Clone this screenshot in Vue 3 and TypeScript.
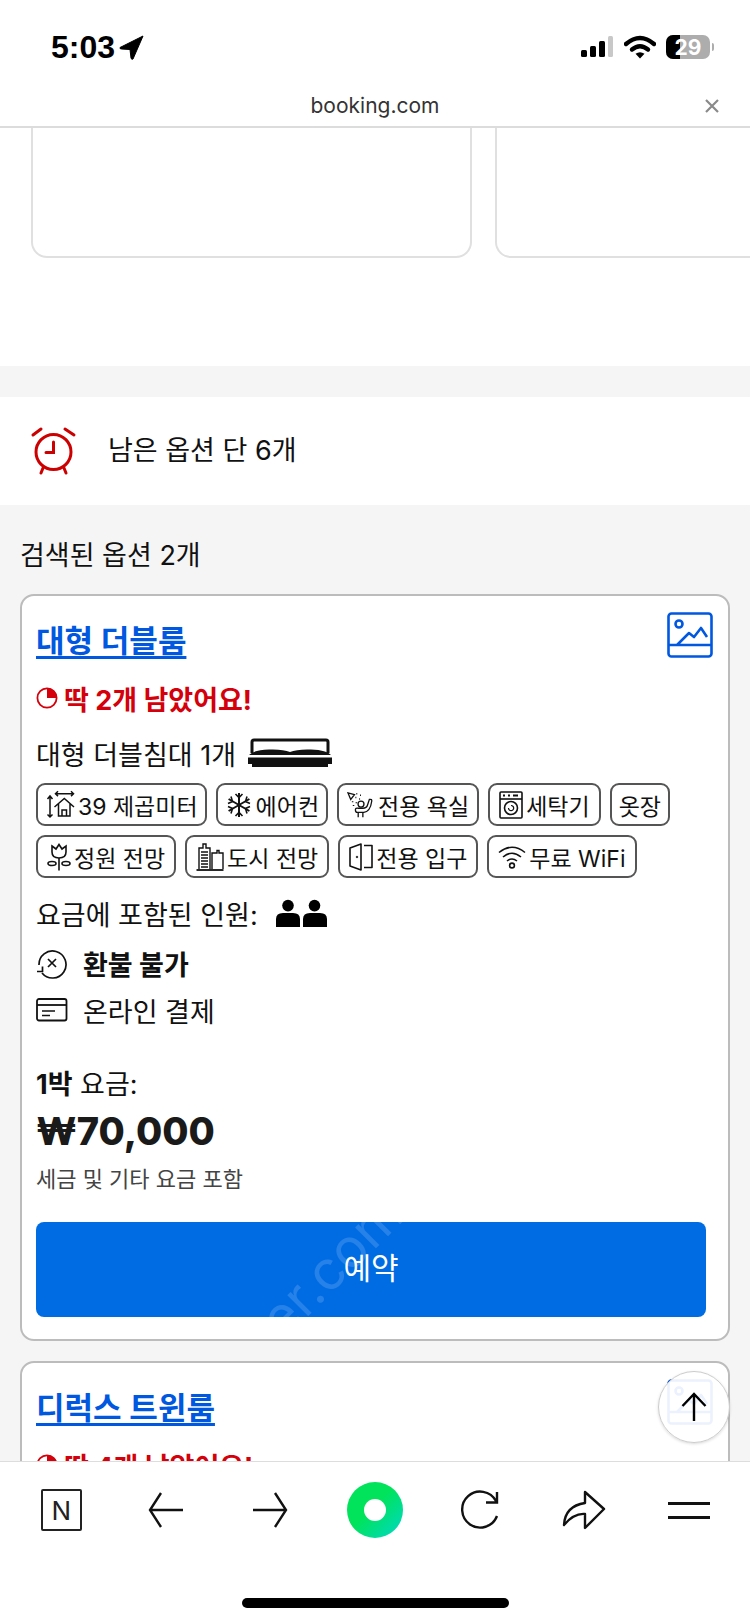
<script setup lang="ts">
const topCards = [1, 2]
</script>

<template>
  <div class="phone">
    <!-- status bar + browser url bar -->
    <header class="top">
      <div class="status">
        <div class="clock">
          <span>5:03</span>
          <svg width="26" height="26" viewBox="0 0 26 26"><path d="M24 2 L1 13.5 Q0.5 15 2.5 15 L11 15.5 L12 24 Q12.5 26 14 25 Z" fill="#000" stroke="#000" stroke-width="1" stroke-linejoin="round" /></svg>
        </div>
        <div class="status-right">
          <svg width="34" height="22" viewBox="0 0 34 22">
            <rect x="1" y="14" width="6" height="7" rx="1.5" fill="#000" />
            <rect x="10" y="10" width="6" height="11" rx="1.5" fill="#000" />
            <rect x="19" y="5" width="6" height="16" rx="1.5" fill="#000" />
            <rect x="28" y="0" width="5" height="21" rx="1.5" fill="#c8c8c8" />
          </svg>
          <svg width="32" height="24" viewBox="0 0 32 24">
            <path d="M2 9 Q16 -3 30 9" fill="none" stroke="#000" stroke-width="4.4" stroke-linecap="round" />
            <path d="M8 14.5 Q16 8 24 14.5" fill="none" stroke="#000" stroke-width="4.4" stroke-linecap="round" />
            <path d="M16 23.5 L11.5 18.8 Q16 15.5 20.5 18.8 Z" fill="#000" />
          </svg>
          <div class="battery"><div class="battery-fill"></div><span>29</span></div>
          <div class="battery-tip"></div>
        </div>
      </div>
      <div class="urlbar">
        <span class="url">booking.com</span>
        <svg class="url-close" width="16" height="16" viewBox="0 0 16 16"><path d="M2 2 L14 14 M14 2 L2 14" stroke="#8a8a8a" stroke-width="2.2" /></svg>
      </div>
    </header>

    <main class="content">
      <section class="top-cards">
        <div v-for="c in topCards" :key="c" class="blank-card"></div>
      </section>

      <section class="alarm">
        <svg width="48" height="52" viewBox="0 0 48 52" fill="none" stroke="#cc0000" stroke-width="3" stroke-linecap="round">
          <circle cx="23.5" cy="27" r="17.5" />
          <path d="M3 10 L11 4 M35 4 L44 10 M13 43 L11 48 M34 43 L36 48" />
          <path d="M23.5 17 V27.5 H16" />
        </svg>
        <span>남은 옵션 단 6개</span>
      </section>

      <section class="results">
        <h2 class="count">검색된 옵션 2개</h2>

        <article class="room">
          <div class="room-head">
            <a class="room-title">대형 더블룸</a>
            <svg class="pic" width="46" height="46" viewBox="0 0 46 46" fill="none" stroke="#0057e0" stroke-width="2.6" stroke-linejoin="round">
              <rect x="1.5" y="1.5" width="43" height="43" rx="3" />
              <circle cx="12" cy="12" r="3.5" />
              <path d="M10 33 L22 21 L27 25 L34 16 L40 25 M1.5 33 H44.5" />
            </svg>
          </div>

          <div class="left">
            <svg width="22" height="22" viewBox="0 0 22 22">
              <circle cx="11" cy="11" r="9.6" fill="none" stroke="#d4000b" stroke-width="1.8" />
              <path d="M11 1 A10 10 0 0 1 21 11 H11 Z" fill="#d4000b" />
            </svg>
            <span>딱 2개 남았어요!</span>
          </div>

          <div class="bed">
            <span>대형 더블침대 1개</span>
            <svg width="86" height="30" viewBox="0 0 86 30">
              <path d="M5 15 V4 Q5 2 7 2 H79 Q81 2 81 4 V15" fill="none" stroke="#111" stroke-width="3" />
              <path d="M2 17 Q6 12 22 11.5 Q36 11 43 14 Q50 11 64 11.5 Q80 12 84 17 Z" fill="#111" />
              <path d="M1 19.5 H85 V26 H81 V29 H5 V26 H1 Z" fill="#111" />
            </svg>
          </div>

          <div class="chips">
            <div class="chip chip-tight">
              <svg width="30" height="30" viewBox="0 0 30 30" fill="none" stroke="#111" stroke-width="1.5">
                <path d="M5 6 V27 M2.5 9 L5 6 L7.5 9 M2.5 24.5 L5 27 L7.5 24.5" />
                <path d="M10.5 3.7 H28.5 M13 1.3 L10.5 3.7 L13 6.1 M26 1.3 L28.5 3.7 L26 6.1" />
                <path d="M9.5 17 L19.3 8.5 L29 17 M13.5 14 V26 H25 V14 M17 26 V20 H21.5 V26" />
              </svg>
              <span>39 제곱미터</span>
            </div>
            <div class="chip chip-tight">
              <svg width="28" height="28" viewBox="0 0 28 28" fill="none" stroke="#111" stroke-width="1.6">
                <path d="M14 2 V26 M3.6 8 L24.4 20 M24.4 8 L3.6 20" stroke-width="2" />
                <path d="M10.5 3 L14 6.5 L17.5 3 M10.5 25 L14 21.5 L17.5 25 M3 12.5 L7.5 10.5 L6 5.5 M25 12.5 L20.5 10.5 L22 5.5 M3 15.5 L7.5 17.5 L6 22.5 M25 15.5 L20.5 17.5 L22 22.5" />
              </svg>
              <span>에어컨</span>
            </div>
            <div class="chip chip-snug">
              <svg width="28" height="28" viewBox="0 0 30 30" fill="none" stroke="#111" stroke-width="1.4">
                <path d="M1 2 L8 4 L4 9 Z" />
                <path d="M10 3 H11 M14 4.5 H15 M9 7 H10 M13 8.5 H14 M6 11 V12 M7 15 V16 M10 12 V13" stroke-dasharray="2 2" stroke-width="1.6" />
                <circle cx="15" cy="14" r="3.2" />
                <path d="M9 20 Q9 18 12 18.5 H17 Q21 18.5 22 15 L24 9 Q27 8.5 26.5 11 Q25 22 18 23 H11 Q9 23 9 20 Z" />
                <path d="M12 23 V28 M17 23 V28" />
              </svg>
              <span>전용 욕실</span>
            </div>
            <div class="chip">
              <svg width="24" height="28" viewBox="0 0 24 28" fill="none" stroke="#111" stroke-width="1.6">
                <rect x="1" y="1" width="22" height="26" rx="1" />
                <path d="M1 8 H23" />
                <path d="M4 4.5 H6 M9 4.5 H11 M14 4.5 H19" stroke-width="1.8" />
                <circle cx="12" cy="17" r="6.5" />
                <path d="M9.5 17 A2.6 2.6 0 1 0 12 14.5" stroke-width="1.2" />
              </svg>
              <span>세탁기</span>
            </div>
            <div class="chip chip-tight"><span>옷장</span></div>
            <div class="chip">
              <svg width="24" height="28" viewBox="0 0 24 28" fill="none" stroke="#111" stroke-width="1.6">
                <path d="M5 3 L9 6 L12 1.5 L15 6 L19 3 V9 Q19 15 12 15 Q5 15 5 9 Z" />
                <path d="M12 15 V27.5" />
                <ellipse cx="5" cy="20.5" rx="4" ry="2" />
                <ellipse cx="19" cy="20.5" rx="4" ry="2" />
              </svg>
              <span>정원 전망</span>
            </div>
            <div class="chip">
              <svg width="28" height="28" viewBox="0 0 28 28" fill="none" stroke="#111" stroke-width="1.4">
                <path d="M3 26 V5 H7 V1 H10 V5 H14 V26" />
                <path d="M5 9 H12 M5 12 H12 M5 15 H12 M5 18 H12 M5 21 H12 M5 24 H12" />
                <path d="M16 26 V10 H21 V7.5 H23 V10 H27 V26" />
                <path d="M0.5 27 H27.5" stroke-width="1.8" />
              </svg>
              <span>도시 전망</span>
            </div>
            <div class="chip">
              <svg width="24" height="28" viewBox="0 0 24 28" fill="none" stroke="#111" stroke-width="1.6" stroke-linejoin="round">
                <path d="M1 5 L12 1 V27 L1 23 Z" />
                <path d="M15 2.5 H23 V24.5 H15" />
                <circle cx="8" cy="14" r="0.8" fill="#111" stroke-width="0.8" />
              </svg>
              <span>전용 입구</span>
            </div>
            <div class="chip">
              <svg width="28" height="24" viewBox="0 0 28 24" fill="none" stroke="#111" stroke-width="1.6">
                <path d="M1 7.5 Q14 -3 27 7.5 M5 12 Q14 4.5 23 12 M9 16 Q14 12 19 16" />
                <circle cx="14" cy="20.5" r="2.4" />
              </svg>
              <span>무료 WiFi</span>
            </div>
          </div>

          <div class="guests">
            <span>요금에 포함된 인원:</span>
            <svg width="52" height="28" viewBox="0 0 52 28" fill="#000">
              <circle cx="13" cy="6.6" r="5.8" />
              <path d="M1 28 V20 Q1 14 8 14 H18 Q25 14 25 20 V28 Z" />
              <circle cx="39.5" cy="6.6" r="5.8" />
              <path d="M28 28 V20 Q28 14 35 14 H45 Q52 14 52 20 V28 Z" />
            </svg>
          </div>

          <div class="term term-bold">
            <svg width="32" height="32" viewBox="0 0 32 32" fill="none" stroke="#111" stroke-width="1.7">
              <path d="M6 26 A13.5 13.5 0 1 0 3 18" />
              <path d="M1 24.5 H6.5 V19.5" />
              <path d="M12 12 L20 20 M20 12 L12 20" />
            </svg>
            <span>환불 불가</span>
          </div>
          <div class="term term-card">
            <svg width="32" height="24" viewBox="0 0 32 24" fill="none" stroke="#111" stroke-width="1.8">
              <rect x="1" y="1" width="29.5" height="21.5" rx="2" />
              <path d="M1 7 H30.5" />
              <path d="M6 13 H19 M6 17.5 H14" stroke-width="1.5" />
            </svg>
            <span>온라인 결제</span>
          </div>

          <div class="rate"><b>1박</b> 요금:</div>
          <div class="price">₩70,000</div>
          <div class="tax">세금 및 기타 요금 포함</div>

          <button class="book">
            <span class="mark">er.com</span>
            <span class="book-label">예약</span>
          </button>
        </article>

        <article class="room">
          <div class="room-head">
            <a class="room-title">디럭스 트윈룸</a>
            <svg class="pic" width="46" height="46" viewBox="0 0 46 46" fill="none" stroke="#0057e0" stroke-width="2.6" stroke-linejoin="round">
              <rect x="1.5" y="1.5" width="43" height="43" rx="3" />
              <circle cx="12" cy="12" r="3.5" />
              <path d="M10 33 L22 21 L27 25 L34 16 L40 25 M1.5 33 H44.5" />
            </svg>
          </div>
          <div class="left">
            <svg width="22" height="22" viewBox="0 0 22 22">
              <circle cx="11" cy="11" r="9.6" fill="none" stroke="#d4000b" stroke-width="1.8" />
              <path d="M11 1 A10 10 0 0 1 21 11 H11 Z" fill="#d4000b" />
            </svg>
            <span>딱 4개 남았어요!</span>
          </div>
        </article>
      </section>

      <button class="to-top">
        <svg width="26" height="30" viewBox="0 0 26 30" fill="none" stroke="#000" stroke-width="2.4">
          <path d="M13 29 V2 M1.5 14 L13 2 L24.5 14" />
        </svg>
      </button>
    </main>

    <!-- in-app browser toolbar -->
    <footer class="toolbar">
      <nav class="tools">
        <div class="n-box">N</div>
        <svg width="36" height="36" viewBox="0 0 36 36" fill="none" stroke="#111" stroke-width="2.4"><path d="M35 18 H2 M13 1 L2 18 L13 35" /></svg>
        <svg width="36" height="36" viewBox="0 0 36 36" fill="none" stroke="#111" stroke-width="2.4"><path d="M1 18 H34 M23 1 L34 18 L23 35" /></svg>
        <div class="green"><div class="green-hole"></div></div>
        <svg width="40" height="40" viewBox="0 0 40 40" fill="none" stroke="#111" stroke-width="2.4"><path d="M37 26 A18 18 0 1 1 36 11 M37 2 V12.5 H26" /></svg>
        <svg width="44" height="40" viewBox="0 0 44 40" fill="none" stroke="#111" stroke-width="2.4" stroke-linejoin="round"><path d="M2 35 Q3 16 23 13 V2 L42 19 L23 38 V24 Q12 23 2 35 Z" /></svg>
        <div class="menu"><i></i><i></i></div>
      </nav>
      <div class="home"></div>
    </footer>
  </div>
</template>

<style scoped>
.phone {
  width: 750px;
  height: 1623px;
  display: flex;
  flex-direction: column;
  overflow: hidden;
  background: #fff;
  color: #111;
  font-family: Inter, "Noto Sans CJK KR", sans-serif;
}

/* top bars */
.top {
  flex: none;
  border-bottom: 2px solid #dcdcdc;
}

.status {
  height: 85px;
  display: flex;
  justify-content: space-between;
  align-items: flex-start;
  padding: 31px 36px 0 51px;
  box-sizing: border-box;
}

.clock {
  display: flex;
  align-items: center;
  gap: 4px;
  font-family: "Liberation Sans", sans-serif;
  font-size: 32px;
  line-height: 32px;
  font-weight: 700;
  color: #000;
}

.status-right {
  display: flex;
  align-items: center;
  gap: 10px;
  margin-top: 4px;
}

.battery {
  position: relative;
  width: 44px;
  height: 24px;
  border-radius: 7px;
  background: #adadad;
  overflow: hidden;
  display: flex;
  align-items: center;
  justify-content: center;
  color: #fff;
  font-size: 21px;
  font-weight: 700;
}

.battery span {
  position: relative;
}

.battery-fill {
  position: absolute;
  left: 0;
  top: 0;
  bottom: 0;
  width: 14px;
  background: #000;
}

.battery-tip {
  width: 2px;
  height: 8px;
  margin-left: -8px;
  background: #adadad;
  border-radius: 0 2px 2px 0;
}

.urlbar {
  position: relative;
  height: 41px;
  display: flex;
  align-items: flex-start;
  justify-content: center;
}

.url {
  font-size: 21px;
  line-height: 42px;
  color: #333;
}

.url-close {
  position: absolute;
  right: 30px;
  top: 13px;
}

/* scrolled page */
.content {
  position: relative;
  flex: 1;
  min-height: 0;
  overflow: hidden;
  background: #f5f5f5;
}

.top-cards {
  height: 238px;
  background: #fff;
  display: flex;
  gap: 23px;
  padding-left: 31px;
  margin-bottom: 31px;
}

.blank-card {
  flex: none;
  width: 441px;
  height: 130px;
  box-sizing: border-box;
  border: 2px solid #e0e0e0;
  border-top: none;
  border-radius: 0 0 16px 16px;
}

.alarm {
  height: 108px;
  background: #fff;
  display: flex;
  align-items: center;
  gap: 30px;
  padding-left: 30px;
  font-size: 27px;
  color: #111;
}

.alarm span {
  margin-bottom: 6px;
}

.results {
  padding: 32px 20px 0;
}

.count {
  margin: 0 0 19px;
  font-size: 27px;
  line-height: 38px;
  font-weight: 400;
  color: #111;
}

.room {
  background: #fff;
  border: 2px solid #bcbcbc;
  border-radius: 14px;
  padding: 16px 22px 22px 14px;
  margin-bottom: 20px;
}

.room-head {
  display: flex;
  justify-content: space-between;
  align-items: flex-start;
  height: 62px;
}

.room-title {
  margin-top: 7px;
  font-size: 31px;
  line-height: 44px;
  font-weight: 600;
  color: #0057e0;
  text-decoration: underline;
  text-underline-offset: 4px;
}

.pic {
  margin-right: -7px;
}

.left {
  display: flex;
  align-items: center;
  gap: 6px;
  margin-top: 5px;
  height: 38px;
  font-size: 27px;
  font-weight: 700;
  color: #d4000b;
}

.bed {
  display: flex;
  align-items: center;
  gap: 11px;
  margin-top: 17px;
  height: 38px;
  font-size: 27px;
}

.chips {
  display: flex;
  flex-wrap: wrap;
  gap: 9px;
  margin-top: 11px;
}

.chip {
  height: 43px;
  box-sizing: border-box;
  display: flex;
  align-items: center;
  gap: 3px;
  padding: 0 9px;
  border: 2px solid #555;
  border-radius: 9px;
  font-size: 23px;
  white-space: nowrap;
}

.chip-tight {
  padding: 0 7px;
}

.chip-snug {
  padding: 0 8px;
}

.guests {
  display: flex;
  align-items: center;
  gap: 17px;
  margin-top: 16px;
  height: 38px;
  font-size: 27px;
}

.term {
  display: flex;
  align-items: center;
  gap: 15px;
  margin-top: 12px;
  height: 38px;
  font-size: 27px;
}

.term-bold {
  font-weight: 700;
}

.term-card {
  margin-top: 9px;
}

.rate {
  margin-top: 37px;
  font-size: 27px;
  line-height: 38px;
}

.price {
  margin-top: 2px;
  font-size: 38px;
  line-height: 50px;
  font-weight: 800;
  color: #1a1a1a;
}

.tax {
  margin-top: 8px;
  font-size: 22px;
  line-height: 30px;
  color: #444;
}

.book {
  position: relative;
  display: block;
  width: 100%;
  height: 95px;
  margin-top: 28px;
  padding: 0 0 8px;
  overflow: hidden;
  border: none;
  border-radius: 8px;
  background: #006ce4;
  color: #fff;
  font: inherit;
  font-size: 30px;
}

.book-label {
  position: relative;
}

/* watermark from the photographed page */
.mark {
  position: absolute;
  left: 208px;
  top: 14px;
  font-size: 54px;
  line-height: 60px;
  color: rgba(255, 255, 255, 0.15);
  transform: rotate(-45deg);
}

.to-top {
  position: absolute;
  right: 20px;
  top: 1243px;
  width: 72px;
  height: 72px;
  padding: 0;
  display: flex;
  align-items: center;
  justify-content: center;
  border: 1px solid #ccc;
  border-radius: 50%;
  background: rgba(255, 255, 255, 0.92);
  box-shadow: 0 1px 3px rgba(0, 0, 0, 0.15);
}

/* bottom toolbar */
.toolbar {
  flex: none;
  height: 162px;
  background: #fff;
  border-top: 1px solid #ddd;
  box-sizing: border-box;
  display: flex;
  flex-direction: column;
  align-items: center;
}

.tools {
  width: 100%;
  box-sizing: border-box;
  display: grid;
  grid-template-columns: repeat(7, 1fr);
  justify-items: center;
  align-items: center;
  padding: 20px 9px 0;
}

.n-box {
  width: 41px;
  height: 42px;
  box-sizing: border-box;
  border: 2.5px solid #222;
  border-radius: 2px;
  display: flex;
  align-items: center;
  justify-content: center;
  font-size: 26px;
  color: #222;
}

.green {
  width: 56px;
  height: 56px;
  border-radius: 50%;
  background: linear-gradient(135deg, #00e35a 45%, #00d8c8 100%);
  display: flex;
  align-items: center;
  justify-content: center;
}

.green-hole {
  width: 22px;
  height: 22px;
  border-radius: 50%;
  background: #fff;
}

.menu {
  width: 42px;
  display: flex;
  flex-direction: column;
  gap: 11px;
}

.menu i {
  display: block;
  height: 3px;
  background: #111;
}

.home {
  width: 267px;
  height: 10px;
  margin-top: 60px;
  border-radius: 5px;
  background: #000;
}
</style>
